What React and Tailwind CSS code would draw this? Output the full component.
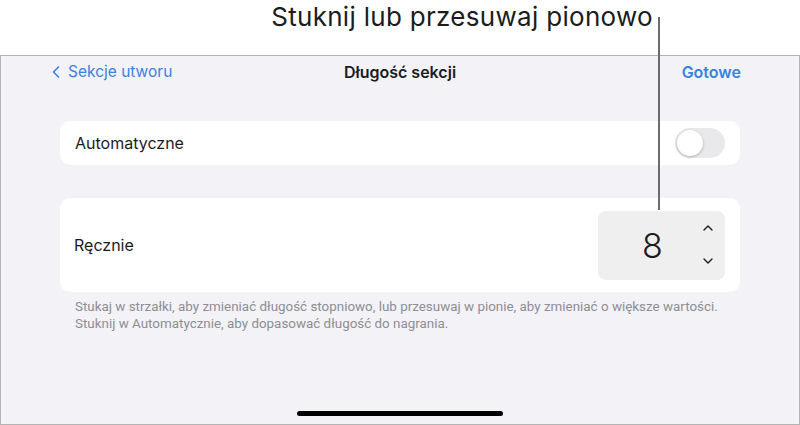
import { ChevronLeft, ChevronUp, ChevronDown } from 'lucide-react';

export default function App() {
  return (
    <div className="relative w-[800px] h-[425px] bg-white flex flex-col overflow-hidden" style={{ fontFamily: 'Inter, "Noto Sans", sans-serif' }}>
      {/* callout */}
      <div className="h-[55px] flex justify-end pr-[147px] pt-[2px]">
        <span className="text-[26px] leading-[30px] text-[#1c1c1c] tracking-[0.3px] font-['Inter',sans-serif]">Stuknij lub przesuwaj pionowo</span>
      </div>
      <div className="absolute left-[658px] top-[17px] w-[2px] h-[193px] bg-[#6b6b6b] z-10" />

      {/* panel */}
      <div className="flex-1 bg-[#f2f2f7] border border-[#b4b4b4] flex flex-col">
        <div className="h-[29px] mt-[1px] relative flex items-center justify-between pl-[45px] pr-[58px]">
          <div className="flex items-center gap-[2px] text-[#3a82e0] text-[15.5px]">
            <ChevronLeft size={20} strokeWidth={2} />
            <span>Sekcje utworu</span>
          </div>
          <span className="absolute left-1/2 -translate-x-1/2 text-[16px] font-semibold text-[#1c1c1e]">Długość sekcji</span>
          <span className="text-[16px] font-semibold text-[#3a82e0]">Gotowe</span>
        </div>

        <div className="mx-[59px] mt-[35px] h-[44px] bg-white rounded-[10px] flex items-center justify-between pl-[15px] pr-[15px]">
          <span className="text-[16px] text-[#1c1c1e]">Automatyczne</span>
          <div className="w-[50px] h-[30px] rounded-full bg-[#e9e9eb] p-[2px] flex">
            <div className="w-[26px] h-[26px] rounded-full bg-white shadow-[0_1px_3px_rgba(0,0,0,0.25)]" />
          </div>
        </div>

        <div className="mx-[59px] mt-[33px] h-[94px] bg-white rounded-[10px] flex items-center justify-between pl-[14px] pr-[15px]">
          <span className="text-[16px] text-[#1c1c1e]">Ręcznie</span>
          <div className="w-[127px] h-[69px] rounded-[8px] bg-[#efeff0] flex items-center">
            <span className="flex-1 text-center pl-[16px] text-[34px] font-light text-[#1c1c1e]">8</span>
            <div className="w-[34px] flex flex-col items-center gap-[17px] -mt-[2px]">
              <ChevronUp size={16} strokeWidth={2} className="text-[#1c1c1e]" />
              <ChevronDown size={16} strokeWidth={2} className="text-[#1c1c1e]" />
            </div>
          </div>
        </div>

        <div className="mx-[74px] mt-[6px] text-[13.4px] leading-[17px] text-[#8e8e93] font-['Roboto',sans-serif]">
          <p>Stukaj w strzałki, aby zmieniać długość stopniowo, lub przesuwaj w pionie, aby zmieniać o większe wartości.</p>
          <p>Stuknij w Automatycznie, aby dopasować długość do nagrania.</p>
        </div>

        <div className="mt-auto mb-[8px] flex justify-center">
          <div className="w-[206px] h-[5px] rounded-full bg-black" />
        </div>
      </div>
    </div>
  );
}
